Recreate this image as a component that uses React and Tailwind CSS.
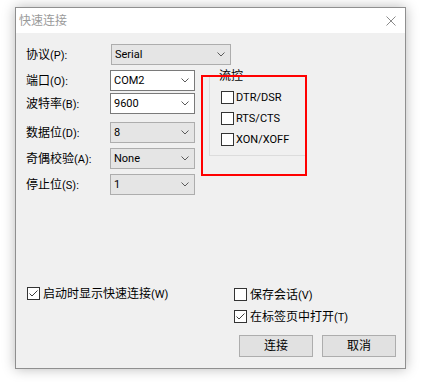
import React from 'react';

const Chevron = () => (
  <svg width="8" height="5" viewBox="0 0 8 5" className="shrink-0">
    <path d="M0.5 0.5 L4 4 L7.5 0.5" fill="none" stroke="#5a5a5a" strokeWidth="1" />
  </svg>
);

const Select = ({ value, editable, width = 'w-[85px]' }) => (
  <div
    className={`${width} h-[21px] flex items-center justify-between pl-[3px] pr-[5px] border ${
      editable ? 'bg-white border-[#7a7a7a]' : 'bg-[#e5e5e5] border-[#adadad]'
    }`}
  >
    <span className="text-[11px] leading-none text-black">{value}</span>
    <Chevron />
  </div>
);

const Row = ({ label, hot, children, className = '' }) => (
  <div className={`flex items-center h-[21px] ${className}`}>
    <div className="w-[84px] text-[12px] leading-none text-black whitespace-nowrap">
      {label}
      <span className="text-[11px]">({hot}):</span>
    </div>
    {children}
  </div>
);

const CheckBox = ({ checked, label, hot }) => (
  <div className="flex items-center h-[13px] gap-[3px]">
    <div className="w-[13px] h-[13px] border border-[#333333] bg-white flex items-center justify-center shrink-0">
      {checked && (
        <svg width="11" height="11" viewBox="0 0 11 11">
          <path d="M1.5 5.5 L4 8 L9.5 2.5" fill="none" stroke="#3c3c3c" strokeWidth="1" />
        </svg>
      )}
    </div>
    <span className="text-[12px] leading-none text-black whitespace-nowrap">
      {label}
      {hot && <span className="text-[11px]">({hot})</span>}
    </span>
  </div>
);

const Button = ({ children }) => (
  <button className="w-[74px] h-[22px] border border-[#adadad] bg-[#e1e1e1] text-[12px] leading-none text-black">
    {children}
  </button>
);

export default function App() {
  const flowItems = ['DTR/DSR', 'RTS/CTS', 'XON/XOFF'];

  return (
    <div className="w-[422px] h-[382px] bg-white overflow-hidden pt-[7px] pl-[15px] font-[Roboto,'Noto_Sans_CJK_SC',sans-serif]">
      <div className="w-[391px] h-[362px] border border-[#8f8f8f] shadow-[0_0_12px_rgba(0,0,0,0.28)] flex flex-col">
        {/* title bar */}
        <div className="h-[25px] bg-white flex items-center justify-between pl-[3px] pr-[9px]">
          <span className="text-[12px] leading-none text-[#9a9a9a]">快速连接</span>
          <svg width="10" height="10" viewBox="0 0 10 10">
            <path d="M0.5 0.5 L9.5 9.5 M9.5 0.5 L0.5 9.5" stroke="#8a8a8a" strokeWidth="1" />
          </svg>
        </div>

        {/* body */}
        <div className="relative flex-1 bg-[#f0f0f0] pl-[10px] pr-[9px]">
          <Row label="协议" hot="P" className="mt-[11px]">
            <div className="ml-[1px]">
              <Select value="Serial" width="w-[120px]" />
            </div>
          </Row>

          <div className="flex">
            <div className="flex flex-col">
              <Row label="端口" hot="O" className="mt-[5px]">
                <Select value="COM2" editable />
              </Row>
              <Row label="波特率" hot="B" className="mt-[2px]">
                <Select value="9600" editable />
              </Row>
              <Row label="数据位" hot="D" className="mt-[8px]">
                <Select value="8" />
              </Row>
              <Row label="奇偶校验" hot="A" className="mt-[5px]">
                <Select value="None" />
              </Row>
              <Row label="停止位" hot="S" className="mt-[5px]">
                <Select value="1" />
              </Row>
            </div>

            {/* flow control group */}
            <div className="relative ml-[14px] mt-[11px] w-[97px] h-[80px] border border-[#dcdcdc] pl-[11px] pt-[14px] flex flex-col gap-[8px]">
              <span className="absolute left-[8px] top-[-8px] px-[1px] bg-[#f0f0f0] text-[12px] leading-[14px] text-black">
                流控
              </span>
              {flowItems.map((item) => (
                <div key={item} className="flex items-center h-[13px] gap-[2px]">
                  <div className="w-[13px] h-[13px] border border-[#333333] bg-white shrink-0" />
                  <span className="text-[11px] leading-none text-black">{item}</span>
                </div>
              ))}
            </div>
          </div>

          {/* red highlight */}
          <div className="absolute left-[185px] top-[42px] w-[106px] h-[101px] border-2 border-[#ff0000] pointer-events-none" />

          {/* bottom */}
          <div className="flex justify-between mt-[92px]">
            <div className="ml-[1px]">
              <CheckBox checked label="启动时显示快速连接" hot="W" />
            </div>
            <div className="w-[162px] mt-[1px] flex flex-col">
              <CheckBox label="保存会话" hot="V" />
              <div className="mt-[9px]">
                <CheckBox checked label="在标签页中打开" hot="T" />
              </div>
              <div className="mt-[12px] flex justify-end gap-[9px]">
                <Button>连接</Button>
                <Button>取消</Button>
              </div>
            </div>
          </div>
        </div>
      </div>
    </div>
  );
}
